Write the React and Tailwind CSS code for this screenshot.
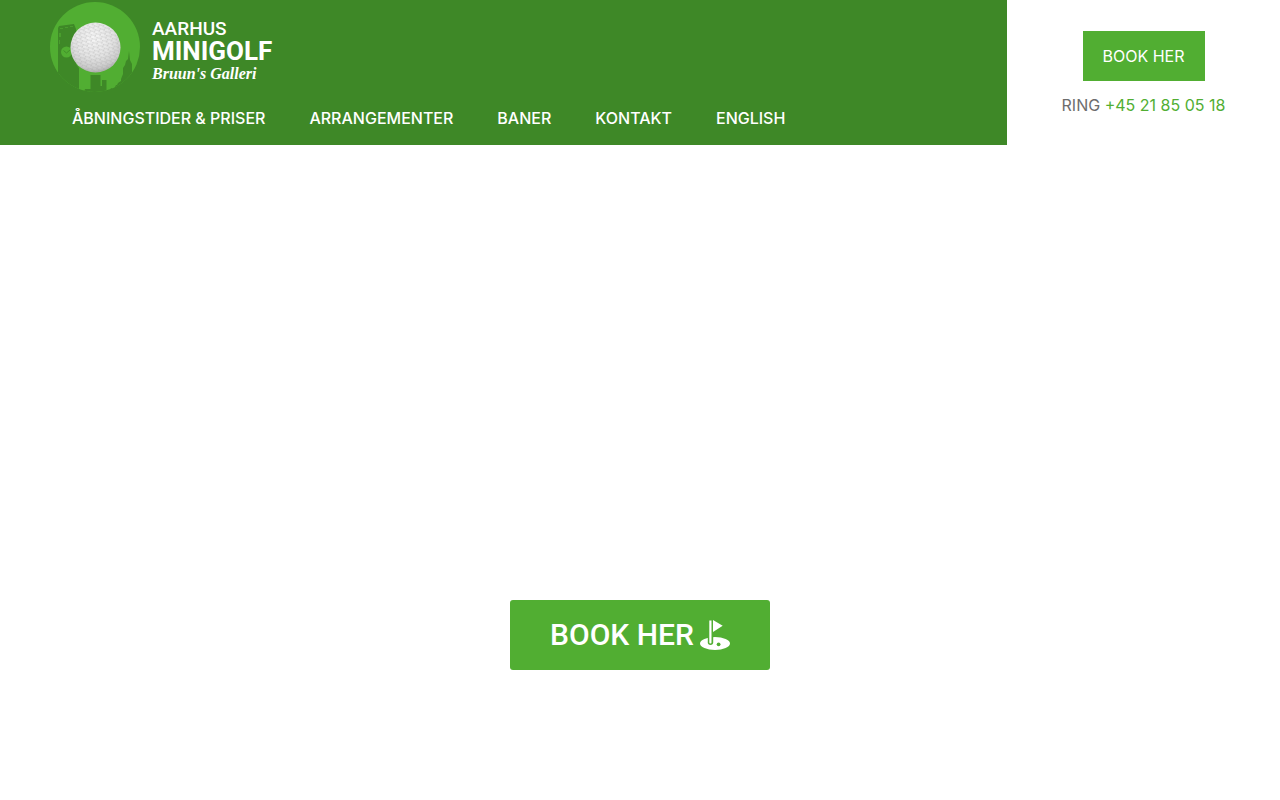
const menu = [
    { label: 'ÅBNINGSTIDER & PRISER', href: '#priser' },
    { label: 'ARRANGEMENTER', href: '#arrangementer' },
    { label: 'BANER', href: '#baner' },
    { label: 'KONTAKT', href: '#kontakt' },
    { label: 'ENGLISH', href: '#english' },
];

function LogoMark() {
    return (
        <svg viewBox="0 0 90 90" className="w-[90px] h-[90px] shrink-0" aria-hidden="true">
            <defs>
                <clipPath id="disc"><circle cx="45" cy="45" r="45" /></clipPath>
                <radialGradient id="ball" cx="0.46" cy="0.3" r="0.72">
                    <stop offset="0" stopColor="#f6f6f6" />
                    <stop offset="0.55" stopColor="#e4e4e4" />
                    <stop offset="0.85" stopColor="#cccccc" />
                    <stop offset="1" stopColor="#a8a8a8" />
                </radialGradient>
                <pattern id="dimples" width="5" height="4" patternUnits="userSpaceOnUse" patternTransform="rotate(-12)">
                    <path d="M0 1 L1.2 2 H2.5 L3.7 1 L5 1 M2.5 2 L1.8 4 M3.7 1 L3 0" fill="none" stroke="#9a9a9a" strokeWidth="0.6" opacity="0.5" />
                </pattern>
            </defs>
            <circle cx="45" cy="45" r="45" fill="#51ae32" />
            {/* Skyline */}
            <g clipPath="url(#disc)" fill="#3e8827">
                <path d="M8 90 V26 L9 24 L24 22 L26 27 V62 L29 66 V90 Z" />
                <path d="M40.500 90 V73 H50.500 V84 H52 V78 H56.500 V88 H60 L61 86 H63 L64 87 L66 83 H67 L68 81 L71 79 V77 L73 72 V66 L75 63 L76 59 L78 57 L79 49 L80 58 L82 62 V74 L84 70 V68 H90 V90 Z" />
                <path d="M34 90 L35 87 H41 V90 Z M0 70 H9 V90 H0 Z" />
            </g>
            <path d="M10 26h3v1h-3z M15 25h3v1h-3z M20 24h3v1h-3z M9 31h2v4H9z M9 38h1v4H9z" fill="#51ae32" opacity="0.6" />
            <circle cx="16.500" cy="50" r="5.500" fill="#51ae32" />
            <path d="M13.500 48.500 L16.500 51 L20 48" fill="none" stroke="#3e8827" strokeWidth="0.8" />
            <circle cx="45.500" cy="45.500" r="25" fill="url(#ball)" />
            <circle cx="45.500" cy="45.500" r="24.500" fill="url(#dimples)" />
        </svg>
    );
}

function GolfIcon() {
    return (
        <svg viewBox="0 0 30 30" className="w-[30px] h-[30px]" fill="#fff" aria-hidden="true">
            <ellipse cx="15" cy="23.500" rx="15" ry="6.500" />
            <path d="M7.800 16 V22.300 A2.700 2.700 0 0 0 13.200 22.300 V16 Z" fill="#51ae32" />
            <path d="M9.300 0.500 H11.500 V22.500 A1.100 1.100 0 0 1 9.300 22.500 Z" />
            <path d="M13 0 L22.700 5.800 L13 12 Z" />
            <circle cx="18.600" cy="24.300" r="1.900" fill="#51ae32" />
        </svg>
    );
}

export default function App() {
    return (
        <div className="min-h-screen bg-white font-['Inter',sans-serif]">
            <header className="flex items-stretch">
                <div className="flex-1 bg-[#3e8827] pt-[2px] pl-[50px]">
                    <a href="#top" className="flex w-fit text-white">
                        <LogoMark />
                        <span className="flex flex-col pl-3 pt-4 whitespace-nowrap">
                            <span className="font-['Roboto',sans-serif] font-medium text-[19px] leading-[22px]">AARHUS</span>
                            <span className="font-['Roboto',sans-serif] font-bold text-[26px] leading-[22px]">MINIGOLF</span>
                            <span className="font-['Liberation_Serif',serif] font-bold italic text-base leading-6">Bruun's Galleri</span>
                        </span>
                    </a>
                    <nav className="flex gap-11 px-[22px] pt-[14px] pb-[15px] text-white text-base leading-6 font-medium whitespace-nowrap">
                        {menu.map((item) => (
                            <a key={item.label} href={item.href} className="hover:underline">{item.label}</a>
                        ))}
                    </nav>
                </div>
                <div className="w-[273px] shrink-0 flex flex-col items-center pt-[31px]">
                    <a href="#book" className="bg-[#51ae32] text-white text-base leading-[50px] px-5">BOOK HER</a>
                    <p className="pt-3 text-base leading-6 text-[#6d6d6d]">
                        RING <a href="tel:+4521850518" className="text-[#51ae32]">+45 21 85 05 18</a>
                    </p>
                </div>
            </header>
            <main className="flex justify-center pt-[455px]">
                <a href="#book" className="flex items-center gap-[6px] h-[70px] px-10 rounded-[3px] bg-[#51ae32] text-white font-['Roboto',sans-serif] font-medium text-[30px] leading-[30px]">
                    BOOK HER
                    <GolfIcon />
                </a>
            </main>
        </div>
    );
}
